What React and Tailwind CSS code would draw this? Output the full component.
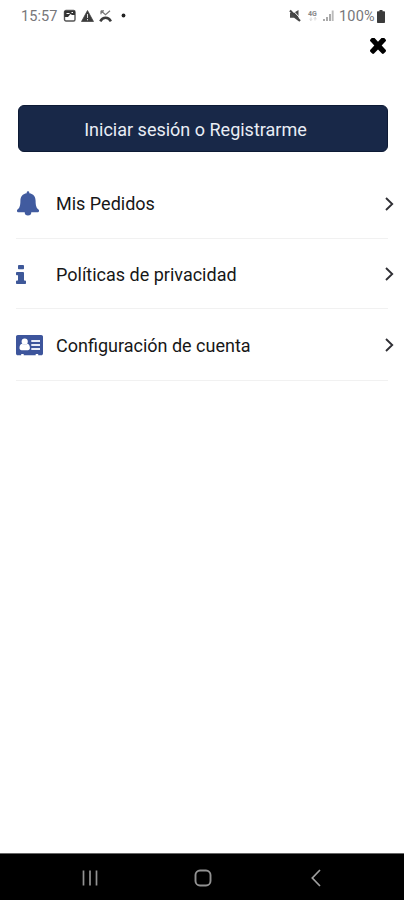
const ROBOTO = "font-['Roboto','Liberation_Sans',sans-serif]";

function BellIcon() {
    return (
        <svg width="22" height="25" viewBox="0 0 22 25" fill="#415b9f">
            <path d="M9.700 1.500a1.300 1.300 0 0 1 2.600 0v.7c4.200.6 6.300 3.600 6.300 7.600 0 5 .8 7.500 3.400 9.300v1c0 .7-.4 1.100-.9 1.100h-6.800a3.300 3.300 0 0 1-6.600 0H.9c-.5 0-.9-.4-.9-1.100v-1C2.600 17.300 3.400 14.800 3.400 9.800c0-4 2.100-7 6.300-7.600z" />
        </svg>
    );
}

function InfoIcon() {
    return (
        <svg width="10" height="19" viewBox="576 128 640 1408" preserveAspectRatio="none" fill="#3e5899">
            <path d="M1216 1344v128q0 26-19 45t-45 19h-512q-26 0-45-19t-19-45v-128q0-26 19-45t45-19h64v-384h-64q-26 0-45-19t-19-45v-128q0-26 19-45t45-19h384q26 0 45 19t19 45v576h64q26 0 45 19t19 45zm-128-1152v192q0 26-19 45t-45 19h-256q-26 0-45-19t-19-45v-192q0-26 19-45t45-19h256q26 0 45 19t19 45z" />
        </svg>
    );
}

function CardIcon() {
    return (
        <svg width="27" height="21" viewBox="0 0 27 21">
            <path d="M1.800 0h23.400c1 0 1.800.8 1.800 1.800v16.700c0 1-.8 1.800-1.800 1.800h-3v-1.200h-2.500v1.200H7.700v-1.200H5.200v1.200H1.800C.8 20.300 0 19.500 0 18.500V1.800C0 .8.8 0 1.800 0z" fill="#3d559c" />
            <circle cx="8.700" cy="6.700" r="3.100" fill="#fff" />
            <path d="M6 8.800c1.600 1.300 3.800 1.300 5.400 0 1.800.3 2.500 2.400 2.500 4.300 0 1.300-.8 2.200-2 2.200H5.500c-1.200 0-2-.9-2-2.200 0-1.900.7-4 2.500-4.300z" fill="#fff" />
            <path d="M15.300 6H24M15.300 10H24M15.300 14H24" stroke="#e8ecf8" strokeWidth="1.900" />
        </svg>
    );
}

function ChevronIcon() {
    return (
        <svg width="9" height="14" viewBox="0 0 9 14" fill="none" stroke="#303035" strokeWidth="1.900">
            <path d="M1 1l6.200 6L1 13" />
        </svg>
    );
}

function StatusBar() {
    return (
        <div className="flex h-8 items-center justify-between pl-[21px] pr-[19px] text-[14.500px] text-[#77777a]">
            <div className="flex items-center">
                <span className="w-[42px] pt-px tracking-[0.1px]">15:57</span>
                <svg width="64" height="14" viewBox="0 0 64 14">
                    <rect x="1.500" y="1.500" width="10.500" height="10.500" rx="1.500" fill="none" stroke="#555" strokeWidth="1.400" />
                    <path d="M1.500 2h10.500v4H9L7.500 5 5 8H1.500z" fill="#333" />
                    <path d="M3.500 4.500h3M8.500 3.500h1.500" stroke="#fff" />
                    <path d="M24.500 1.500l6 11h-12z" fill="#3c3c3c" stroke="#3c3c3c" strokeWidth=".7" strokeLinejoin="round" />
                    <path d="M24.500 5v4M24.500 10v1.300" stroke="#ddd" />
                    <path d="M37.300 12.300c2.600-4.600 8-4.600 10.600 0" fill="none" stroke="#3c3c3c" strokeWidth="2.500" />
                    <path d="M38 1.800v3.400M38 1.800H41M38 1.800l4.500 4 4.500-4" fill="none" stroke="#777" strokeWidth="1.200" />
                    <circle cx="60.500" cy="6.500" r="1.900" fill="#222" />
                </svg>
            </div>
            <div className="flex items-center">
                <svg width="46" height="16" viewBox="0 0 46 16">
                    <path d="M1 5h3.500L9.500 2v11L5 9.800H1z" fill="#4a4a4a" />
                    <path d="M3 1.500l9 9.500" stroke="#fff" strokeWidth="1" />
                    <path d="M1 2.500l10 10.500" stroke="#444" strokeWidth="2.100" />
                    <path d="M22 9.500v3m-1.500-1.300l1.500 1.300 1-1M26 12.500v-3m-1 1l1-1 1.500 1.300" fill="none" stroke="#ccc" strokeWidth=".8" />
                    <text x="19" y="7.500" fontSize="7" fontWeight="700" fill="#888">4G</text>
                    <path d="M35 13v-2M38 13V9M41 13V6" stroke="#aaa" strokeWidth="2" />
                    <path d="M43.700 13V2.500" stroke="#bbb" strokeWidth="1.900" />
                </svg>
                <span className="ml-[4px] w-[38px] whitespace-nowrap pt-px tracking-[0.2px]">100%</span>
                <svg width="8" height="13" viewBox="0 0 8 13" fill="#3b3b3b">
                    <path d="M2.500 0h3v1.300H7c.6 0 1 .4 1 1V12c0 .6-.4 1-1 1H1c-.6 0-1-.4-1-1V2.300c0-.6.4-1 1-1h1.500z" />
                </svg>
            </div>
        </div>
    );
}

const menuItems = [
    { label: 'Mis Pedidos', icon: <BellIcon />, iconClass: 'pl-px', rowClass: 'h-[71px] pt-px' },
    { label: 'Políticas de privacidad', icon: <InfoIcon />, iconClass: '', rowClass: 'h-[70px] pt-px' },
    { label: 'Configuración de cuenta', icon: <CardIcon />, iconClass: '', rowClass: 'h-[72px] pt-px' },
];

function MenuRow({ item }) {
    return (
        <li className={`flex items-center border-b border-[#f1f1f1] ${item.rowClass}`}>
            <span className={`w-10 shrink-0 ${item.iconClass}`}>{item.icon}</span>
            <span className="grow whitespace-nowrap text-[18px] text-[#171717]">{item.label}</span>
            <span className="-mr-[6px]"><ChevronIcon /></span>
        </li>
    );
}

function NavigationBar() {
    return (
        <nav className="flex h-[47px] items-center justify-between border-t border-[#666] bg-black pl-[82px] pr-[83px] pt-px">
            <svg width="16" height="18" viewBox="0 0 16 18" stroke="#929292" strokeWidth="1.700">
                <path d="M1.500 1.500v15M8 1.500v15M14.500 1.500v15" />
            </svg>
            <svg className="-ml-[3px]" width="18" height="18" viewBox="0 0 18 18" fill="none" stroke="#929292" strokeWidth="1.900">
                <rect x="1.500" y="1.500" width="15" height="15" rx="4.500" />
            </svg>
            <svg width="10" height="18" viewBox="0 0 10 18" fill="none" stroke="#a0a0a0" strokeWidth="1.700">
                <path d="M9 1L1.300 9 9 17" />
            </svg>
        </nav>
    );
}

function App() {
    return (
        <main className={`flex h-[900px] w-[404px] flex-col overflow-hidden bg-white ${ROBOTO}`}>
            <StatusBar />
            <div className="flex h-[73px] justify-end pr-[18px] pt-[6px]">
                <button className="h-4 w-4" aria-label="Cerrar">
                    <svg width="16" height="16" viewBox="302 430 1188 1124" preserveAspectRatio="none">
                        <path d="M1490 1322q0 40-28 68l-136 136q-28 28-68 28t-68-28l-294-294-294 294q-28 28-68 28t-68-28l-136-136q-28-28-28-68t28-68l294-294-294-294q-28-28-28-68t28-68l136-136q28-28 68-28t68 28l294 294 294-294q28-28 68-28t68 28l136 136q28 28 28 68t-28 68l-294 294 294 294q28 28 28 68z" />
                    </svg>
                </button>
            </div>
            <button className="ml-[18px] h-[47px] w-[370px] shrink-0 rounded-[6px] border border-[#0d1a35] bg-[#182848] pr-[15px] pt-[2px] text-[18px] text-[#e9edf5]">
                Iniciar sesión o Registrarme
            </button>
            <ul className="ml-4 mr-4 mt-4 grow">
                {menuItems.map(item => (
                    <MenuRow key={item.label} item={item} />
                ))}
            </ul>
            <NavigationBar />
        </main>
    );
}

export default App;
